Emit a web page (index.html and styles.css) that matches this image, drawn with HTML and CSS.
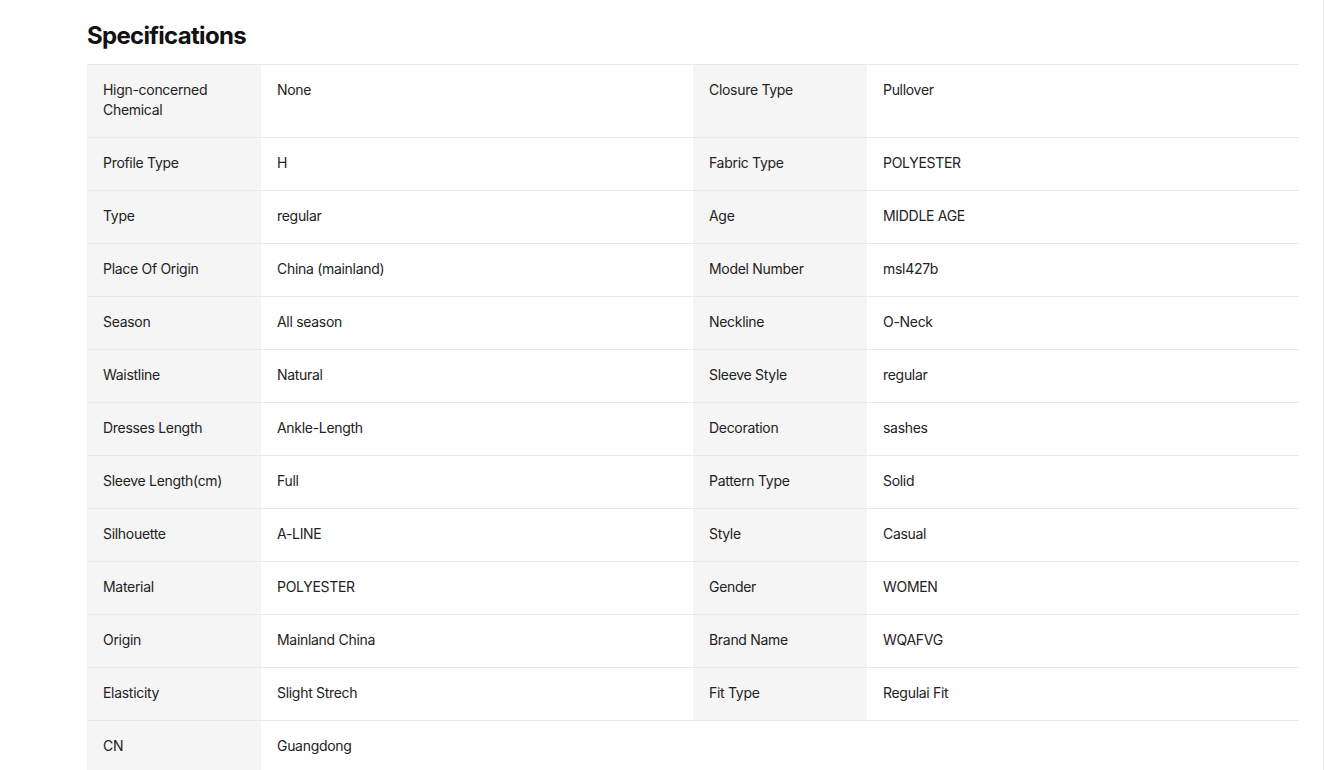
FILE: index.html
```html
<!DOCTYPE html>
<html lang="en">
<head>
<meta charset="utf-8">
<title>Specifications</title>
<link rel="stylesheet" href="styles.css">
</head>
<body>
<div class="page">
  <section class="specs">
    <h2 class="specs-title">Specifications</h2>
    <div class="specs-grid">
      <div class="k">Hign-concerned<br>Chemical</div><div class="v">None</div><div class="k">Closure Type</div><div class="v">Pullover</div>
      <div class="k">Profile Type</div><div class="v">H</div><div class="k">Fabric Type</div><div class="v">POLYESTER</div>
      <div class="k">Type</div><div class="v">regular</div><div class="k">Age</div><div class="v">MIDDLE AGE</div>
      <div class="k">Place Of Origin</div><div class="v">China (mainland)</div><div class="k">Model Number</div><div class="v">msl427b</div>
      <div class="k">Season</div><div class="v">All season</div><div class="k">Neckline</div><div class="v">O-Neck</div>
      <div class="k">Waistline</div><div class="v">Natural</div><div class="k">Sleeve Style</div><div class="v">regular</div>
      <div class="k">Dresses Length</div><div class="v">Ankle-Length</div><div class="k">Decoration</div><div class="v">sashes</div>
      <div class="k">Sleeve Length(cm)</div><div class="v">Full</div><div class="k">Pattern Type</div><div class="v">Solid</div>
      <div class="k">Silhouette</div><div class="v">A-LINE</div><div class="k">Style</div><div class="v">Casual</div>
      <div class="k">Material</div><div class="v">POLYESTER</div><div class="k">Gender</div><div class="v">WOMEN</div>
      <div class="k">Origin</div><div class="v">Mainland China</div><div class="k">Brand Name</div><div class="v">WQAFVG</div>
      <div class="k">Elasticity</div><div class="v">Slight Strech</div><div class="k">Fit Type</div><div class="v">Regulai Fit</div>
      <div class="k">CN</div><div class="v">Guangdong</div>
    </div>
  </section>
</div>
</body>
</html>
```

FILE: styles.css
```css
html, body {
  margin: 0;
  padding: 0;
  background: #fff;
}
body {
  font-family: Inter, "Open Sans", "Liberation Sans", sans-serif;
  color: #222;
  overflow: hidden;
}
.page {
  width: 1324px;
  min-height: 770px;
  border-right: 1px solid #ececec;
  box-sizing: border-box;
}
.specs {
  padding: 21px 0 0 87px;
  width: 1212px;
}
.specs-title {
  margin: 0 0 14px;
  font-size: 24px;
  line-height: 29px;
  font-weight: 700;
  color: #111;
  letter-spacing: -0.7px;
}
.specs-grid {
  display: grid;
  grid-template-columns: 174px 432px 174px 432px;
  border-top: 1px solid #e8e8e8;
}
.k, .v {
  padding: 15px 16px 17px;
  font-size: 14px;
  line-height: 20px;
  letter-spacing: -0.3px;
  border-bottom: 1px solid #e8e8e8;
}
.k {
  background: #f5f5f5;
}
```
